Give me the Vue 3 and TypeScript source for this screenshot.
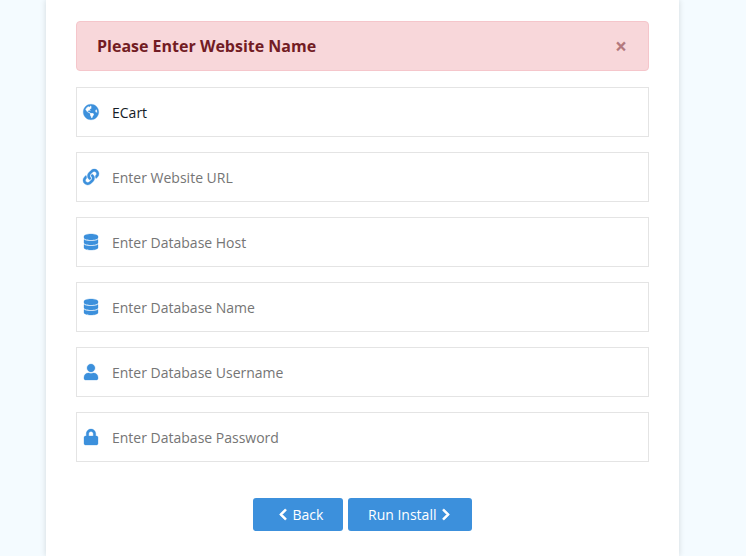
<script setup lang="ts">
import { ref } from 'vue'

const icons: Record<string, { box: string; d: string }> = {
  globe: {
    box: '0 0 496 512',
    d: 'M248 8C111.03 8 0 119.03 0 256s111.03 248 248 248 248-111.03 248-248S384.97 8 248 8zm82.29 357.6c-3.9 3.88-7.99 7.95-11.31 11.28-2.99 3-5.1 6.7-6.17 10.71-1.51 5.66-2.73 11.38-4.77 16.87l-17.39 46.85c-13.76 3-28 4.69-42.65 4.69v-27.38c1.69-12.62-7.64-36.26-22.63-51.25-6-6-9.37-14.14-9.37-22.63v-32.01c0-11.64-6.27-22.34-16.46-27.97-14.37-7.95-34.81-19.06-48.81-26.11-11.48-5.78-22.1-13.14-31.65-21.75l-.8-.72a114.792 114.792 0 0 1-18.06-20.74c-9.38-13.77-24.66-36.42-34.59-51.14 20.47-45.5 57.36-82.04 103.2-101.89l24.01 12.01C203.48 89.74 216 82.01 216 70.11v-11.3c7.99-1.29 16.12-2.11 24.39-2.42l28.3 28.3c6.25 6.25 6.25 16.38 0 22.63L264 112l-10.34 10.34c-3.12 3.12-3.12 8.19 0 11.31l4.69 4.69c3.12 3.12 3.12 8.19 0 11.31l-8 8a8.008 8.008 0 0 1-5.66 2.34h-8.99c-2.08 0-4.08.81-5.58 2.27l-9.92 9.65a8.008 8.008 0 0 0-1.58 9.31l15.59 31.19c2.66 5.32-1.21 11.58-7.15 11.58h-5.64c-1.93 0-3.79-.7-5.24-1.96l-9.28-8.06a16.017 16.017 0 0 0-15.55-3.1l-31.17 10.39a11.95 11.95 0 0 0-8.17 11.34c0 4.53 2.56 8.66 6.61 10.69l11.08 5.54c9.41 4.71 19.79 7.16 30.31 7.16s22.59 27.29 32 32h66.75c8.49 0 16.62 3.37 22.63 9.37l13.69 13.69a30.503 30.503 0 0 1 8.93 21.57 46.536 46.536 0 0 1-13.72 32.98zM417 274.25c-5.79-1.45-10.84-5-14.15-9.97l-17.98-26.97a23.97 23.97 0 0 1 0-26.62l19.59-29.38c2.32-3.47 5.5-6.29 9.24-8.15l12.98-6.49C440.2 193.59 448 223.87 448 256c0 8.67-.74 17.16-1.82 25.54L417 274.25z',
  },
  link: {
    box: '0 0 512 512',
    d: 'M326.612 185.391c59.747 59.809 58.927 155.698.36 214.59-.11.12-.24.25-.36.37l-67.2 67.2c-59.27 59.27-155.699 59.262-214.96 0-59.27-59.26-59.27-155.7 0-214.96l37.106-37.106c9.84-9.84 26.786-3.3 27.294 10.606.648 17.722 3.826 35.527 9.69 52.721 1.986 5.822.567 12.262-3.783 16.612l-13.087 13.087c-28.026 28.026-28.905 73.66-1.155 101.96 28.024 28.579 74.086 28.749 102.325.51l67.2-67.19c28.191-28.191 28.073-73.757 0-101.83-3.701-3.694-7.429-6.564-10.341-8.569a16.037 16.037 0 0 1-6.947-12.606c-.396-10.567 3.348-21.456 11.698-29.806l21.054-21.055c5.521-5.521 14.182-6.199 20.584-1.731a152.482 152.482 0 0 1 20.522 17.197zM467.547 44.449c-59.261-59.262-155.69-59.27-214.96 0l-67.2 67.2c-.12.12-.25.25-.36.37-58.566 58.892-59.387 154.781.36 214.59a152.454 152.454 0 0 0 20.521 17.196c6.402 4.468 15.064 3.789 20.584-1.731l21.054-21.055c8.35-8.35 12.094-19.239 11.698-29.806a16.037 16.037 0 0 0-6.947-12.606c-2.912-2.005-6.64-4.875-10.341-8.569-28.073-28.073-28.191-73.639 0-101.83l67.2-67.19c28.239-28.239 74.3-28.069 102.325.51 27.75 28.3 26.872 73.934-1.155 101.96l-13.087 13.087c-4.35 4.35-5.769 10.79-3.783 16.612 5.864 17.194 9.042 34.999 9.69 52.721.509 13.906 17.454 20.446 27.294 10.606l37.106-37.106c59.271-59.259 59.271-155.699.001-214.959z',
  },
  database: {
    box: '0 0 448 512',
    d: 'M448 73.143v45.714C448 159.143 347.667 192 224 192S0 159.143 0 118.857V73.143C0 32.857 100.333 0 224 0s224 32.857 224 73.143zM448 176v102.857C448 319.143 347.667 352 224 352S0 319.143 0 278.857V176c48.125 33.143 136.208 48.572 224 48.572S399.874 209.143 448 176zm0 160v102.857C448 479.143 347.667 512 224 512S0 479.143 0 438.857V336c48.125 33.143 136.208 48.572 224 48.572S399.874 369.143 448 336z',
  },
  user: {
    box: '0 0 448 512',
    d: 'M224 256c70.7 0 128-57.3 128-128S294.7 0 224 0 96 57.3 96 128s57.3 128 128 128zm89.6 32h-16.7c-22.2 10.2-46.9 16-72.9 16s-50.6-5.8-72.9-16h-16.7C60.2 288 0 348.2 0 422.4V464c0 26.5 21.5 48 48 48h352c26.5 0 48-21.5 48-48v-41.6c0-74.2-60.2-134.4-134.4-134.4z',
  },
  lock: {
    box: '0 0 448 512',
    d: 'M400 224h-24v-72C376 68.2 307.8 0 224 0S72 68.2 72 152v72H48c-26.5 0-48 21.5-48 48v192c0 26.5 21.5 48 48 48h352c26.5 0 48-21.5 48-48V272c0-26.5-21.5-48-48-48zm-104 0H152v-72c0-39.7 32.3-72 72-72s72 32.3 72 72v72z',
  },
}

const fields = ref([
  { id: 'name', icon: 'globe', placeholder: 'Enter Website Name', value: 'ECart', type: 'text' },
  { id: 'url', icon: 'link', placeholder: 'Enter Website URL', value: '', type: 'text' },
  { id: 'host', icon: 'database', placeholder: 'Enter Database Host', value: '', type: 'text' },
  { id: 'db', icon: 'database', placeholder: 'Enter Database Name', value: '', type: 'text' },
  { id: 'user', icon: 'user', placeholder: 'Enter Database Username', value: '', type: 'text' },
  { id: 'pass', icon: 'lock', placeholder: 'Enter Database Password', value: '', type: 'password' },
])

const showAlert = ref(true)
</script>

<template>
  <main class="page">
    <section class="card">
      <div v-if="showAlert" class="alert">
        <strong>Please Enter Website Name</strong>
        <button class="alert-close" @click="showAlert = false">&times;</button>
      </div>

      <div class="fields">
        <label v-for="field in fields" :key="field.id" class="field">
          <svg class="field-icon" :viewBox="icons[field.icon].box" aria-hidden="true">
            <path fill="currentColor" :d="icons[field.icon].d" />
          </svg>
          <input v-model="field.value" :type="field.type" :placeholder="field.placeholder" />
        </label>
      </div>

      <div class="actions">
        <button class="btn btn-back">
          <svg class="chevron" viewBox="0 0 320 512" aria-hidden="true">
            <path fill="currentColor" d="M34.52 239.03L228.87 44.69c9.37-9.37 24.57-9.37 33.94 0l22.67 22.67c9.36 9.36 9.37 24.52.04 33.9L131.49 256l154.02 154.75c9.34 9.38 9.32 24.54-.04 33.9l-22.67 22.67c-9.37 9.37-24.57 9.37-33.94 0L34.52 272.97c-9.37-9.37-9.37-24.57 0-33.94z" />
          </svg>
          Back
        </button>
        <button class="btn btn-next">
          Run Install
          <svg class="chevron" viewBox="0 0 320 512" aria-hidden="true">
            <path fill="currentColor" d="M285.476 272.971L91.132 467.314c-9.373 9.373-24.569 9.373-33.941 0l-22.667-22.667c-9.357-9.357-9.375-24.522-.04-33.901L188.505 256 34.484 101.255c-9.335-9.379-9.317-24.544.04-33.901l22.667-22.667c9.373-9.373 24.569-9.373 33.941 0L285.475 239.03c9.373 9.372 9.373 24.568.001 33.941z" />
          </svg>
        </button>
      </div>
    </section>
  </main>
</template>

<style>
html,
body {
  margin: 0;
  height: 100%;
  overflow: hidden;
}
</style>

<style scoped>
.page {
  height: 100vh;
  padding-left: 46px;
  background-color: #f4fbff;
  font-family: "Open Sans", sans-serif;
  font-size: 14px;
  overflow: hidden;
  box-sizing: border-box;
}

.card {
  width: 633px;
  height: 100%;
  box-sizing: border-box;
  padding: 21px 30px 0;
  background-color: #fff;
  box-shadow: 0 0 6px rgba(0, 0, 0, 0.14);
}

.alert {
  display: flex;
  justify-content: space-between;
  align-items: center;
  height: 50px;
  box-sizing: border-box;
  padding: 0 21px 0 20px;
  border: 1px solid #f5c6cb;
  border-radius: 4px;
  background-color: #f8d7da;
  color: #721c24;
  font-size: 16px;
}

.alert-close {
  padding: 0;
  border: none;
  background: transparent;
  opacity: 0.5;
  font-family: "Open Sans", sans-serif;
  font-size: 21px;
  font-weight: 700;
  line-height: 1;
  cursor: pointer;
  color: #721c24;
}

.fields {
  display: flex;
  flex-direction: column;
  gap: 15px;
  margin-top: 16px;
}

.field {
  display: flex;
  align-items: center;
  height: 50px;
  box-sizing: border-box;
  padding-left: 6px;
  border: 1px solid #e4e4e4;
  background-color: #fff;
}

.field-icon {
  flex: none;
  width: 16px;
  height: 16px;
  color: #3c90dc;
  overflow: visible;
  stroke: currentColor;
  stroke-width: 10;
}

.field input {
  flex: 1;
  min-width: 0;
  height: 100%;
  padding: 0 0 0 13px;
  border: none;
  outline: none;
  background: transparent;
  color: #141c26;
  font-family: inherit;
  font-size: 14px;
}

.field input::placeholder {
  color: #757575;
  opacity: 1;
}

.actions {
  display: flex;
  justify-content: center;
  gap: 5px;
  margin-top: 36px;
}

.btn {
  display: flex;
  align-items: center;
  gap: 5.5px;
  height: 33px;
  border: none;
  border-radius: 3px;
  background-color: #3c90dc;
  color: #fff;
  font-family: inherit;
  font-size: 14px;
  cursor: pointer;
}

.btn-back {
  width: 90px;
  padding: 0 0 0 26px;
}

.btn-next {
  width: 124px;
  padding: 0 0 0 20px;
}

.chevron {
  width: 8px;
  height: 13px;
  overflow: visible;
  stroke: currentColor;
  stroke-width: 26;
}
</style>
